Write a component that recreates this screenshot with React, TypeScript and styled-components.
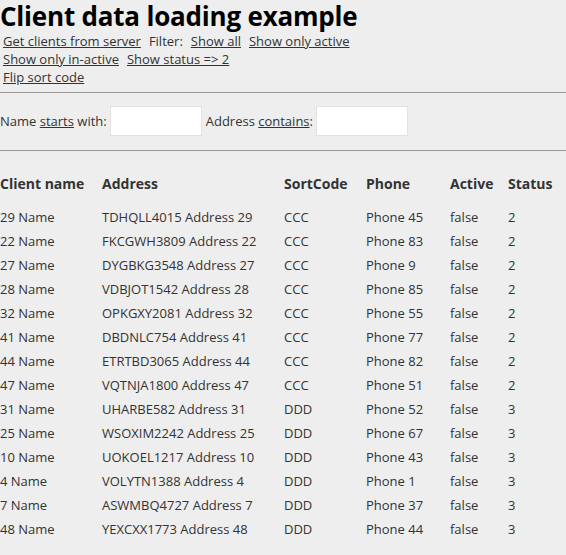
import React from "react";
import styled, { createGlobalStyle } from "styled-components";

const Global = createGlobalStyle`
  html, body { margin: 0; padding: 0; background: #eeeeee; }
  body { font-family: "Open Sans", "Noto Sans", sans-serif; color: #333; font-size: 13px; }
`;

const Page = styled.div`
  display: flex;
  flex-direction: column;
`;

const Title = styled.h1`
  margin: 0;
  font-size: 26px;
  line-height: 32px;
  font-weight: 700;
  color: #000;
  letter-spacing: -0.2px;
`;

const LinkBar = styled.div`
  display: flex;
  flex-direction: column;
  padding-left: 3px;
  line-height: 18px;
`;

const LinkRow = styled.div`
  display: flex;
  column-gap: 8px;
`;

const Link = styled.a`
  color: #333;
  text-decoration: underline;
  cursor: pointer;
`;

const Label = styled.span`
  color: #333;
`;

const Rule = styled.hr`
  margin: 6px 0;
  border: 0;
  border-top: 1px solid #999;
  height: 0;
`;

const FilterRow = styled.div`
  display: flex;
  align-items: center;
  gap: 3px;
  padding: 7px 0 8px;
`;

const Input = styled.input`
  width: 92px;
  height: 30px;
  box-sizing: border-box;
  border: 1px solid #e2e2e2;
  background: #fff;
  outline: none;
  margin-right: 1px;
`;

const U = styled.span`
  text-decoration: underline;
`;

const Table = styled.table`
  border-collapse: collapse;
  margin-top: 13px;
`;

const Th = styled.th<{ $w: number }>`
  width: ${(p) => p.$w}px;
  text-align: left;
  font-weight: 700;
  font-size: 14px;
  color: #333;
  padding: 0 0 9px;
  height: 26px;
  vertical-align: middle;
`;

const Td = styled.td`
  padding: 0;
  height: 24px;
  color: #333;
  white-space: nowrap;
`;

const rows: [string, string, string, string, string, string][] = [
  ["29 Name", "TDHQLL4015 Address 29", "CCC", "Phone 45", "false", "2"],
  ["22 Name", "FKCGWH3809 Address 22", "CCC", "Phone 83", "false", "2"],
  ["27 Name", "DYGBKG3548 Address 27", "CCC", "Phone 9", "false", "2"],
  ["28 Name", "VDBJOT1542 Address 28", "CCC", "Phone 85", "false", "2"],
  ["32 Name", "OPKGXY2081 Address 32", "CCC", "Phone 55", "false", "2"],
  ["41 Name", "DBDNLC754 Address 41", "CCC", "Phone 77", "false", "2"],
  ["44 Name", "ETRTBD3065 Address 44", "CCC", "Phone 82", "false", "2"],
  ["47 Name", "VQTNJA1800 Address 47", "CCC", "Phone 51", "false", "2"],
  ["31 Name", "UHARBE582 Address 31", "DDD", "Phone 52", "false", "3"],
  ["25 Name", "WSOXIM2242 Address 25", "DDD", "Phone 67", "false", "3"],
  ["10 Name", "UOKOEL1217 Address 10", "DDD", "Phone 43", "false", "3"],
  ["4 Name", "VOLYTN1388 Address 4", "DDD", "Phone 1", "false", "3"],
  ["7 Name", "ASWMBQ4727 Address 7", "DDD", "Phone 37", "false", "3"],
  ["48 Name", "YEXCXX1773 Address 48", "DDD", "Phone 44", "false", "3"],
];

const cols: [string, number][] = [
  ["Client name", 102],
  ["Address", 182],
  ["SortCode", 82],
  ["Phone", 84],
  ["Active", 58],
  ["Status", 58],
];

export default function App() {
  return (
    <Page>
      <Global />
      <Title>Client data loading example</Title>
      <LinkBar>
        <LinkRow>
          <Link>Get clients from server</Link>
          <Label>Filter:</Label>
          <Link>Show all</Link>
          <Link>Show only active</Link>
        </LinkRow>
        <LinkRow>
          <Link>Show only in-active</Link>
          <Link>Show status =&gt; 2</Link>
        </LinkRow>
        <LinkRow>
          <Link>Flip sort code</Link>
        </LinkRow>
      </LinkBar>
      <Rule />
      <FilterRow>
        <Label>
          Name <U>starts</U> with:
        </Label>
        <Input />
        <Label>
          Address <U>contains</U>:
        </Label>
        <Input />
      </FilterRow>
      <Rule />
      <Table>
        <thead>
          <tr>
            {cols.map(([c, w]) => (
              <Th key={c} $w={w}>
                {c}
              </Th>
            ))}
          </tr>
        </thead>
        <tbody>
          {rows.map((r) => (
            <tr key={r[0]}>
              {r.map((c, i) => (
                <Td key={i}>{c}</Td>
              ))}
            </tr>
          ))}
        </tbody>
      </Table>
    </Page>
  );
}
